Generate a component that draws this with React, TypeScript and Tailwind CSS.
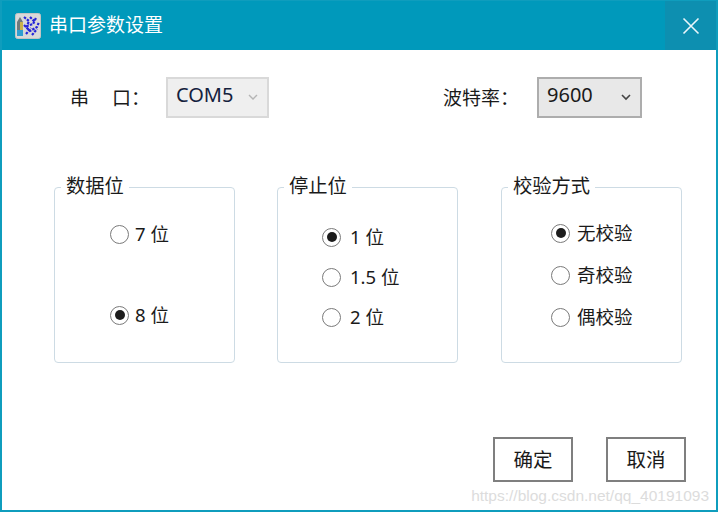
const font = { fontFamily: '"Noto Sans", "Noto Sans CJK SC", sans-serif' };

function AppIcon() {
    return (
        <svg width="26" height="26" viewBox="0 0 26 26" className="shrink-0">
            <rect x="0.5" y="0.5" width="25" height="25" rx="2" fill="#d9d9d9" stroke="#c4c4c4" />
            <path d="M2 9 L5 4 L8 9 V23 H2 Z" fill="#6f7a7c" />
            <rect x="2" y="17" width="6" height="6" fill="#2f9fd0" />
            <rect x="5" y="9" width="3" height="8" fill="#c9b24a" />
            <path d="M9 4 L14 8 L12 13 L18 11 L21 5 M9 12 L15 18 L22 14 L24 9 M11 21 L16 15 M17 22 L22 16 M15 4 L20 9" fill="none" stroke="#2424d8" strokeWidth="2.2" strokeDasharray="2.5 1.2" />
        </svg>
    );
}

function Radio({ label, checked, gap }: { label: string; checked?: boolean; gap: string }) {
    return (
        <div className={`flex h-[30px] items-center ${gap}`}>
            <span className="flex h-[19px] w-[19px] items-center justify-center rounded-full border border-[#7a7a7a] bg-white">
                {checked && <span className="h-[10px] w-[10px] rounded-full bg-[#1c1c1c]" />}
            </span>
            <span className="text-[18.5px] leading-[30px] text-[#1a1a1a]">{label}</span>
        </div>
    );
}

function Group({ title, className, children }: { title: string; className?: string; children: React.ReactNode }) {
    return (
        <fieldset className={`h-[190px] w-[181px] rounded-[4px] border border-[#cddbe4] ${className ?? ''}`}>
            <legend className="ml-[6px] px-[5px] pb-[3px] text-[19.3px] leading-[26px] text-[#1a1a1a]">{title}</legend>
            {children}
        </fieldset>
    );
}

export default function App() {
    return (
        <div className="relative h-[512px] w-[718px] overflow-hidden border-x-2 border-b-2 border-t border-[#0f9dbd] bg-white" style={font}>
            <div className="flex h-[49px] items-center justify-between bg-[#0099bb]">
                <div className="flex items-center gap-[8px] pl-[13px]">
                    <AppIcon />
                    <span className="text-[19px] text-white">串口参数设置</span>
                </div>
                <div className="flex h-full w-[51px] items-center justify-center bg-[#0d8fb0]">
                    <svg width="18" height="18" viewBox="0 0 18 18">
                        <path d="M1.5 1.5 L16.5 16.5 M16.5 1.5 L1.5 16.5" stroke="#eaf6fa" strokeWidth="1.6" fill="none" />
                    </svg>
                </div>
            </div>

            <div className="flex pl-[68px] pt-[27px] text-[19px] text-[#1a1a1a]">
                <div className="flex h-[41px] w-[96px] items-center pt-[2px]">
                    <span className="w-[42px]">串</span>
                    <span>口：</span>
                </div>
                <div className="flex h-[41px] w-[103px] items-start justify-between border-2 border-[#d9d9d9] bg-[#efefef] pl-[8px] pr-[9px] pt-[3px]">
                    <span className="text-[20px] leading-[26px] text-[#14213d]">COM5</span>
                    <svg width="10" height="7" viewBox="0 0 10 7" className="mt-[12px]">
                        <path d="M1 1 L5 5 L9 1" stroke="#b5b5b5" strokeWidth="1.4" fill="none" />
                    </svg>
                </div>
                <div className="ml-[174px] flex h-[41px] w-[94px] items-center pt-[2px]">波特率：</div>
                <div className="flex h-[41px] w-[105px] items-start justify-between border-2 border-[#adadad] bg-[#e8e8e8] pl-[8px] pr-[9px] pt-[3px]">
                    <span className="text-[20px] leading-[26px]">9600</span>
                    <svg width="10" height="7" viewBox="0 0 10 7" className="mt-[12px]">
                        <path d="M1 1 L5 5 L9 1" stroke="#444" strokeWidth="1.6" fill="none" />
                    </svg>
                </div>
            </div>

            <div className="mt-[55px] flex pl-[52px]">
                <Group title="数据位">
                    <div className="flex flex-col gap-[51px] pl-[55px] pt-[17px]">
                        <Radio label="7 位" gap="gap-[6px]" />
                        <Radio label="8 位" checked gap="gap-[6px]" />
                    </div>
                </Group>
                <Group title="停止位" className="ml-[42px]">
                    <div className="flex flex-col gap-[10px] pl-[44px] pt-[20px]">
                        <Radio label="1 位" checked gap="gap-[9px]" />
                        <Radio label="1.5 位" gap="gap-[9px]" />
                        <Radio label="2 位" gap="gap-[9px]" />
                    </div>
                </Group>
                <Group title="校验方式" className="ml-[43px]">
                    <div className="flex flex-col gap-[12px] pl-[49px] pt-[16px]">
                        <Radio label="无校验" checked gap="gap-[7px]" />
                        <Radio label="奇校验" gap="gap-[7px]" />
                        <Radio label="偶校验" gap="gap-[7px]" />
                    </div>
                </Group>
            </div>

            <div className="mt-[74px] flex gap-[33px] pl-[491px]">
                <button className="h-[45px] w-[80px] border-2 border-[#7f7f7f] text-[19.5px] text-[#1a1a1a]">确定</button>
                <button className="h-[45px] w-[80px] border-2 border-[#7f7f7f] text-[19.5px] text-[#1a1a1a]">取消</button>
            </div>

            <div className="absolute bottom-[5px] right-[7px] text-[15.5px] leading-[18px] text-[#dcdcdc]" style={{ fontFamily: '"Liberation Sans", sans-serif' }}>
                https://blog.csdn.net/qq_40191093
            </div>
        </div>
    );
}
